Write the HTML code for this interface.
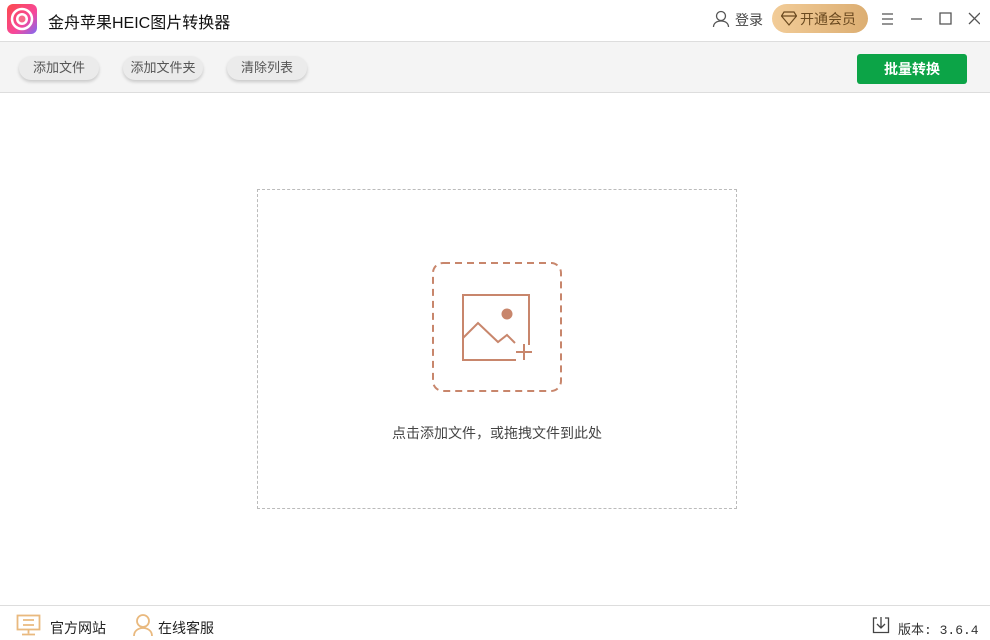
<!DOCTYPE html>
<html><head><meta charset="utf-8"><style>
*{margin:0;padding:0;box-sizing:border-box}
body{width:990px;height:640px;background:#fff;font-family:"Liberation Sans","Noto Sans CJK SC",sans-serif;position:relative;overflow:hidden;color:#333}
.abs{position:absolute}
.btn{position:absolute;top:56px;height:24px;border-radius:12px;background:#ebebeb;box-shadow:0 2px 3px rgba(0,0,0,.18);font-size:13px;color:#555;text-align:center;line-height:24px}
</style></head><body>
<div class="abs" style="left:7px;top:4px;width:30px;height:30px;border-radius:6px;background:linear-gradient(135deg,#fc4a4a,#f7479a 60%,#7b6cf6)"></div>
<svg class="abs" style="left:7px;top:4px" width="30" height="30"><circle cx="15" cy="15" r="10" fill="none" stroke="#fff" stroke-width="2.5"/><circle cx="15" cy="15" r="6" fill="#fff"/><circle cx="15" cy="15" r="3.5" fill="#f76a8a"/></svg>
<div class="abs" style="left:48px;top:9px;font-size:16px;color:#111">金舟苹果HEIC图片转换器</div>
<svg class="abs" style="left:712px;top:10px" width="18" height="18"><circle cx="9" cy="6" r="4.5" fill="none" stroke="#555" stroke-width="1.3"/><path d="M1.5 17c0-4 3.5-6 7.5-6s7.5 2 7.5 6" fill="none" stroke="#555" stroke-width="1.3"/></svg>
<div class="abs" style="left:735px;top:10px;font-size:14px;color:#444">登录</div>
<div class="abs" style="left:772px;top:4px;width:96px;height:29px;border-radius:15px;background:linear-gradient(90deg,#f2cc98,#dcae72)"></div>
<svg class="abs" style="left:781px;top:11px" width="16" height="15"><path d="M3 1h10l2.5 4L8 14 .5 5z M.5 5h15" fill="none" stroke="#6b4a20" stroke-width="1.2"/></svg>
<div class="abs" style="left:800px;top:9px;font-size:14px;color:#6b4a20">开通会员</div>
<svg class="abs" style="left:880px;top:10px" width="100" height="18"><path d="M2 4h11M2 9h11M2 14h11M31 9h11M60 3h11v11H60zM89 3l11 11M100 3L89 14" fill="none" stroke="#555" stroke-width="1.3"/></svg>
<div class="abs" style="left:0;top:41px;width:990px;height:52px;background:#f4f4f4;border-top:1px solid #ddd;border-bottom:1px solid #ddd"></div>
<div class="btn" style="left:19px;width:80px">添加文件</div>
<div class="btn" style="left:123px;width:80px">添加文件夹</div>
<div class="btn" style="left:227px;width:80px">清除列表</div>
<div class="abs" style="left:857px;top:54px;width:110px;height:30px;background:#0ca447;border-radius:3px;color:#fff;font-size:14px;font-weight:bold;text-align:center;line-height:30px">批量转换</div>
<div class="abs" style="left:257px;top:189px;width:480px;height:320px;border:1px dashed #bbb"></div>
<svg class="abs" style="left:430px;top:260px" width="135" height="135"><rect x="3" y="3" width="128" height="128" rx="10" fill="none" stroke="#c8866c" stroke-width="2" stroke-dasharray="7,5"/><path d="M99 85V35H33v65h53" fill="none" stroke="#c8866c" stroke-width="2"/><circle cx="77" cy="54" r="5.5" fill="#c8866c"/><path d="M33 78l15-15 20 19 9-7 8 8M86 92h16M94 84v16" fill="none" stroke="#c8866c" stroke-width="2"/></svg>
<div class="abs" style="left:257px;top:423px;width:480px;text-align:center;font-size:14px;color:#444">点击添加文件，或拖拽文件到此处</div>
<div class="abs" style="left:0;top:605px;width:990px;border-top:1px solid #ddd"></div>
<svg class="abs" style="left:16px;top:614px" width="26" height="22"><rect x="1.5" y="1.5" width="22" height="14" fill="none" stroke="#e9b97e" stroke-width="1.8"/><path d="M7 6h11M7 11h11M12.5 15.5v4M6 20.5h13" stroke="#e9b97e" stroke-width="1.8"/></svg>
<div class="abs" style="left:50px;top:618px;font-size:14px;color:#222">官方网站</div>
<svg class="abs" style="left:132px;top:613px" width="22" height="24"><circle cx="11" cy="8" r="6" fill="none" stroke="#e9b97e" stroke-width="1.8"/><path d="M2 23c0-5 4-8 9-8s9 3 9 8" fill="none" stroke="#e9b97e" stroke-width="1.8"/></svg>
<div class="abs" style="left:158px;top:618px;font-size:14px;color:#222">在线客服</div>
<svg class="abs" style="left:872px;top:616px" width="18" height="18"><path d="M5 2H1.5v14.5h15V2H13M9 1v11M5 8l4 4 4-4" fill="none" stroke="#444" stroke-width="1.3"/></svg>
<div class="abs" style="left:898px;top:619px;font-size:13px;color:#333;font-family:'Liberation Mono','Noto Sans CJK SC',monospace">版本: 3.6.4</div>
</body></html>
